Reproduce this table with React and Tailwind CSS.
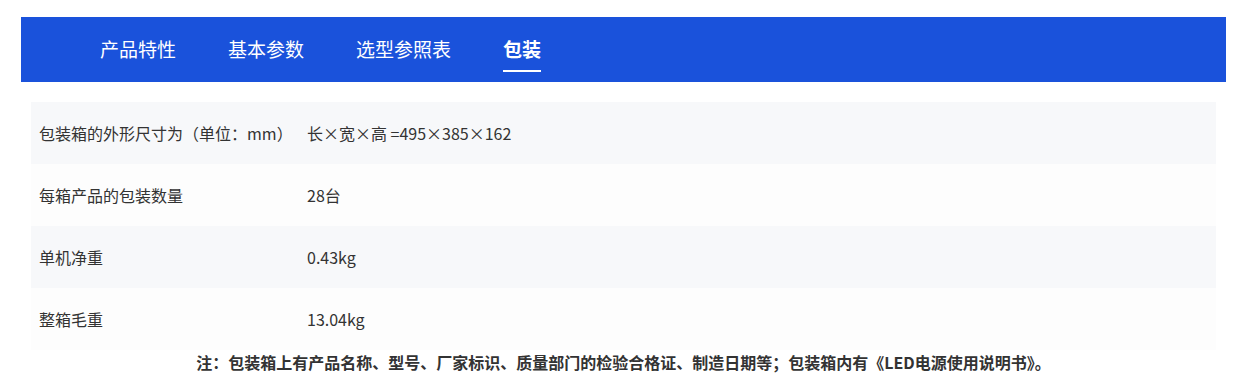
import { useState } from "react"

const tabs = ["产品特性", "基本参数", "选型参照表", "包装"]

const rows = [
  ["包装箱的外形尺寸为（单位：mm）", "长×宽×高 =495×385×162"],
  ["每箱产品的包装数量", "28台"],
  ["单机净重", "0.43kg"],
  ["整箱毛重", "13.04kg"],
]

export default function App() {
  const [active, setActive] = useState(3)

  return (
    <div className="min-h-screen bg-white pt-[17px] font-['Noto_Sans_CJK_SC','Noto_Sans',sans-serif] text-[#333]">
      <div className="ml-[21px] mr-[14px]">
        {/* tab bar */}
        <div className="flex h-[65px] items-center gap-[52px] bg-[#1a52db] pl-[79px]">
          {tabs.map((t, i) => (
            <button
              key={t}
              onClick={() => setActive(i)}
              className={
                "relative h-full text-[19px] leading-none text-white " +
                (i === active ? "font-bold" : "font-normal")
              }
            >
              <span className="relative -top-[1px]">{t}</span>
              {i === active && (
                <span className="absolute left-0 right-0 top-[53px] h-[2px] bg-white"></span>
              )}
            </button>
          ))}
        </div>

        {/* packing table */}
        <div className="mx-[10px] mt-[20px]">
          {rows.map(([k, v], i) => (
            <div
              key={k}
              className={
                "grid h-[62px] grid-cols-[276px_1fr] items-center text-[16px] " +
                (i % 2 === 0 ? "bg-[#f7f8fa]" : "bg-[#fdfdfd]")
              }
            >
              <div className="pl-[8px]">{k}</div>
              <div>{v}</div>
            </div>
          ))}
        </div>

        <p className="pt-[1px] text-center text-[16px] font-bold leading-[22px] text-[#333]">
          注：包装箱上有产品名称、型号、厂家标识、质量部门的检验合格证、制造日期等；包装箱内有《LED电源使用说明书》。
        </p>
      </div>
    </div>
  )
}
